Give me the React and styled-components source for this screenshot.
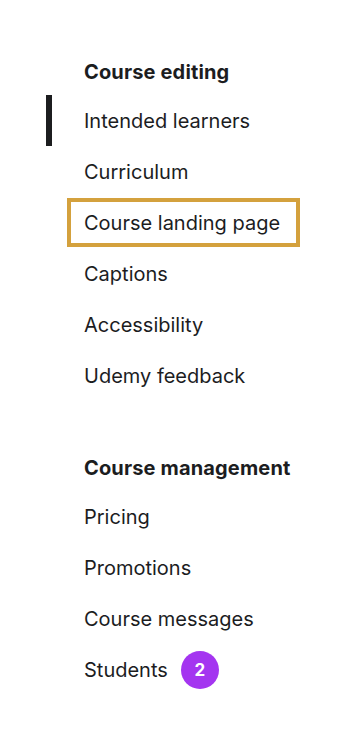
import styled, { createGlobalStyle } from "styled-components";

const GlobalStyle = createGlobalStyle`
  body {
    margin: 0;
    background: #fff;
    font-family: Inter, "Noto Sans", sans-serif;
    color: #1c1d1f;
  }
`;

const sections = [
  {
    title: "Course editing",
    items: [
      { label: "Intended learners", active: true },
      { label: "Curriculum" },
      { label: "Course landing page", focused: true },
      { label: "Captions" },
      { label: "Accessibility" },
      { label: "Udemy feedback" },
    ],
  },
  {
    title: "Course management",
    items: [
      { label: "Pricing" },
      { label: "Promotions" },
      { label: "Course messages" },
      { label: "Students", badge: 2 },
    ],
  },
];

const App = () => {
  return (
    <>
      <GlobalStyle />
      <Nav>
        {sections.map((section) => (
          <Section key={section.title}>
            <Heading>{section.title}</Heading>
            <List>
              {section.items.map((item) => (
                <Item key={item.label} $active={item.active}>
                  <Link href="#" $focused={item.focused}>
                    {item.label}
                  </Link>
                  {item.badge && <Badge>{item.badge}</Badge>}
                </Item>
              ))}
            </List>
          </Section>
        ))}
      </Nav>
    </>
  );
};

export default App;

const Nav = styled.nav`
  display: flex;
  flex-direction: column;
  gap: 55px;
  padding: 60px 0 0 46px;
`;

const Section = styled.section`
  display: flex;
  flex-direction: column;
`;

const Heading = styled.h2`
  margin: 0 0 11px 38px;
  height: 24px;
  line-height: 24px;
  font-size: 20px;
  font-weight: 700;
  letter-spacing: 0.15px;
`;

const List = styled.ul`
  list-style: none;
  margin: 0;
  padding: 0;
`;

const Item = styled.li`
  display: flex;
  align-items: center;
  gap: 13px;
  height: 51px;
  padding-left: 32px;
  border-left: 6px solid ${(p) => (p.$active ? "#1c1d1f" : "transparent")};
`;

const Link = styled.a`
  display: inline-flex;
  align-items: center;
  height: 41px;
  padding: 0 16px 0 13px;
  margin-left: -13px;
  margin-right: -16px;
  font-size: 20px;
  color: #1c1d1f;
  text-decoration: none;
  outline: ${(p) => (p.$focused ? "4px solid #d4a13d" : "none")};
`;

const Badge = styled.span`
  display: inline-flex;
  align-items: center;
  justify-content: center;
  width: 38px;
  height: 38px;
  border-radius: 50%;
  background: #a435f0;
  color: #fff;
  font-size: 17px;
  font-weight: 700;
`;
